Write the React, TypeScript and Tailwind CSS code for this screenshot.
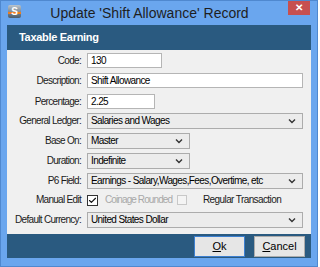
import { Check } from "lucide-react";

function Chevron() {
  return (
    <svg width="8" height="6" viewBox="0 0 8 6" className="shrink-0">
      <path d="M1 1.5 L4 4.5 L7 1.5" fill="none" stroke="#333" strokeWidth="1.4" />
    </svg>
  );
}

function Row({
  label,
  children,
  className = "",
}: {
  label: string;
  children: React.ReactNode;
  className?: string;
}) {
  return (
    <div className={`flex items-center ${className}`}>
      <div className="w-[75px] text-right pr-[1px] text-[10px] tracking-[-0.7px] text-[#1b1b1b] leading-none whitespace-nowrap">
        {label}
      </div>
      <div className="ml-[5px] flex-1 flex">{children}</div>
    </div>
  );
}

function TextBox({ value, width }: { value: string; width?: string }) {
  return (
    <div
      className={`h-[15px] bg-white border border-[#b5b5b5] px-[3px] flex items-center text-[10px] tracking-[-0.6px] text-black leading-none whitespace-nowrap ${
        width ?? "w-full"
      }`}
    >
      {value}
    </div>
  );
}

function Select({ value, width }: { value: string; width?: string }) {
  return (
    <div
      className={`h-[16px] bg-[#ececec] border border-[#acacac] pl-[3px] pr-[6px] flex items-center justify-between text-[10px] tracking-[-0.6px] text-black leading-none whitespace-nowrap ${
        width ?? "w-full"
      }`}
    >
      <span>{value}</span>
      <Chevron />
    </div>
  );
}

export default function App() {
  return (
    <div
      className="w-[318px] h-[267px] bg-[#6aa6ee] border border-[#4f88cf] flex flex-col overflow-hidden"
      style={{ fontFamily: '"Liberation Sans", Arial, sans-serif' }}
    >
      {/* Title bar */}
      <div className="h-[24px] flex items-start relative">
        <div className="mt-[4px] ml-[7px] w-[13px] h-[13px] rounded-[2px] bg-gradient-to-b from-[#b9c3cc] to-[#4d5c6a] flex items-end justify-center overflow-hidden relative">
          <div className="absolute left-0 right-0 top-[7px] h-[2px] bg-[#f07c1e]" />
          <span className="text-[10px] font-bold text-white leading-none mb-[1px] relative">S</span>
        </div>
        <div className="flex-1 text-center text-[14px] text-[#1e1e1e] mt-[5px] leading-none -ml-[10px] whitespace-nowrap">
          Update 'Shift Allowance' Record
        </div>
        <div className="w-[22px] h-[15px] bg-[#c75050] mr-[7px] -mt-[1px] flex items-center justify-center text-white text-[10px] font-bold leading-none">
          ✕
        </div>
      </div>

      {/* Inner panel */}
      <div className="mx-[6px] flex flex-col h-[233px]">
        <div className="h-[25px] bg-[#2a5a80] flex items-center pl-[12px] text-white font-bold text-[11px] tracking-[-0.3px] leading-none">
          Taxable Earning
        </div>

        <div className="flex-1 bg-[#f0f0f0] pr-[8px] pt-[3px] flex flex-col">
          <Row label="Code:">
            <TextBox value="130" width="w-[75px]" />
          </Row>
          <Row label="Description:" className="mt-[5px]">
            <TextBox value="Shift Allowance" />
          </Row>
          <Row label="Percentage:" className="mt-[6px]">
            <TextBox value="2.25" width="w-[68px]" />
          </Row>
          <Row label="General Ledger:" className="mt-[4px]">
            <Select value="Salaries and Wages" />
          </Row>
          <Row label="Base On:" className="mt-[4px]">
            <Select value="Master" width="w-[103px]" />
          </Row>
          <Row label="Duration:" className="mt-[4px]">
            <Select value="Indefinite" width="w-[103px]" />
          </Row>
          <Row label="P6 Field:" className="mt-[4px]">
            <Select value="Earnings - Salary,Wages,Fees,Overtime, etc" />
          </Row>
          <Row label="Manual Edit" className="mt-[5px]">
            <div className="flex items-center text-[10px] tracking-[-0.6px] leading-none h-[12px] whitespace-nowrap">
              <div className="w-[11px] h-[11px] bg-white border border-[#333] flex items-center justify-center">
                <Check size={9} strokeWidth={3} color="#111" />
              </div>
              <span className="ml-[7px] w-[72px] tracking-[-0.9px] text-[#a8a8a8]">Coinage Rounded</span>
              <div className="w-[10px] h-[10px] bg-[#f4f4f4] border border-[#c8c8c8]" />
              <span className="ml-[16px] text-[#1b1b1b]">Regular Transaction</span>
            </div>
          </Row>
          <Row label="Default Currency:" className="mt-[6px]">
            <Select value="United States Dollar" />
          </Row>
        </div>

        <div className="h-[24px] bg-[#2a5a80] flex items-start justify-end pr-[6px] pt-[2px] gap-[9px]">
          <div className="w-[51px] h-[21px] bg-[#e6e6e6] border border-[#3c7fd0] flex items-center justify-center text-[11px] text-black leading-none">
            <span className="underline">O</span>k
          </div>
          <div className="w-[51px] h-[21px] bg-[#e6e6e6] border border-[#acacac] flex items-center justify-center text-[11px] text-black leading-none">
            <span className="underline">C</span>ancel
          </div>
        </div>
      </div>
    </div>
  );
}
